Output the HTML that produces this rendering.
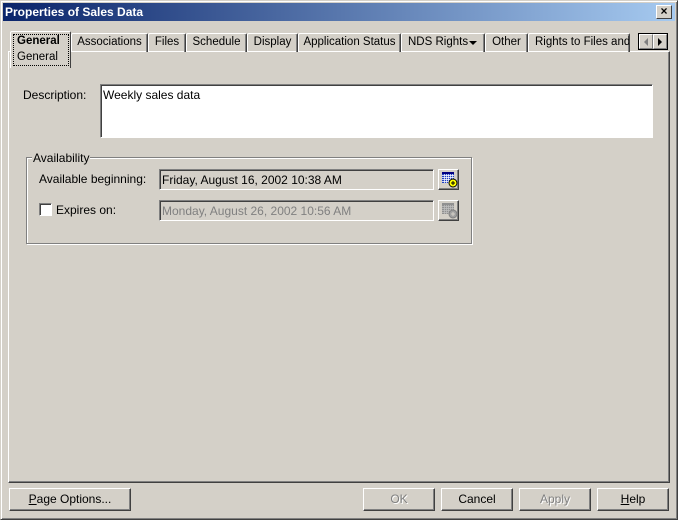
<!DOCTYPE html>
<html><head><style>
*{margin:0;padding:0;box-sizing:border-box}
body{width:678px;height:520px;background:#d4d0c8;font-family:"Liberation Sans",Arial,sans-serif;font-size:12px;color:#000;position:relative;overflow:hidden}
.a{position:absolute}
.win{left:0;top:0;width:678px;height:520px;border:1px solid;border-color:#d4d0c8 #404040 #404040 #d4d0c8;box-shadow:inset 1px 1px 0 #fff,inset -1px -1px 0 #808080}
.title{left:3px;top:3px;width:672px;height:18px;background:linear-gradient(to right,#0a246a,#a6caf0);color:#fff;font-weight:bold;font-size:12px;line-height:18px;padding-left:2px}
.close{left:656px;top:5px;width:16px;height:14px;background:#d4d0c8;border:1px solid;border-color:#fff #404040 #404040 #fff;font-size:12px;font-weight:bold;line-height:11px;text-align:center}
.tab{top:33px;height:19px;border:1px solid;border-bottom:none;border-color:#fff #404040 #fff #fff;line-height:16px;text-align:center;box-shadow:inset -1px 0 0 #808080;border-radius:2px 2px 0 0;white-space:nowrap;overflow:hidden;font-size:11.5px}
.panel{left:8px;top:51px;width:662px;height:432px;border:1px solid;border-color:#fff #404040 #404040 #fff;box-shadow:inset -1px -1px 0 #808080}
.sunk{border:1px solid;border-color:#808080 #fff #fff #808080;box-shadow:inset 1px 1px 0 #404040}
.btn{height:23px;border:1px solid;border-color:#fff #404040 #404040 #fff;box-shadow:inset -1px -1px 0 #808080;text-align:center;line-height:20px;font-size:12px}
.dis{color:#808080;text-shadow:1px 1px 0 #fff}
</style></head><body>
<div class="a win"></div>
<div class="a title">Properties of Sales Data</div>
<div class="a close">×</div>

<div class="a panel"></div>
<div class="a tab" style="left:71px;width:77px">Associations</div>
<div class="a tab" style="left:148px;width:38px">Files</div>
<div class="a tab" style="left:186px;width:61px">Schedule</div>
<div class="a tab" style="left:247px;width:51px">Display</div>
<div class="a tab" style="left:298px;width:103px">Application Status</div>
<div class="a tab" style="left:401px;width:84px;text-align:left;padding-left:6px">NDS Rights<span class="a" style="left:67px;top:7px;width:0;height:0;border-left:4px solid transparent;border-right:4px solid transparent;border-top:4px solid #000"></span></div>
<div class="a tab" style="left:485px;width:43px">Other</div>
<div class="a tab" style="left:528px;width:102px;text-align:left;padding-left:6px">Rights to Files and F</div>
<div class="a" style="left:638px;top:33px;width:30px;height:17px;border:1px solid #000;background:#d4d0c8">
 <div class="a" style="left:0;top:0;width:14px;height:15px;border:1px solid;border-color:#fff #808080 #808080 #fff"><span class="a" style="left:4px;top:3px;border-top:4px solid transparent;border-bottom:4px solid transparent;border-right:4px solid #808080"></span></div>
 <div class="a" style="left:14px;top:0;width:14px;height:15px;border:1px solid;border-color:#fff #808080 #808080 #fff"><span class="a" style="left:4px;top:3px;border-top:4px solid transparent;border-bottom:4px solid transparent;border-left:4px solid #000"></span></div>
</div>
<div class="a" style="left:10px;top:31px;width:61px;height:37px;background:#d4d0c8;border:1px solid;border-bottom:none;border-color:#fff #404040 #fff #fff;border-radius:2px 2px 0 0"></div>
<div class="a" style="left:13px;top:34px;width:56px;height:32px;border:1px dotted #000"></div>
<div class="a" style="left:17px;top:35px;font-weight:bold;font-size:11.5px">General</div>
<div class="a" style="left:17px;top:51px;font-size:11.5px">General</div>

<div class="a" style="left:23px;top:88px">Description:</div>
<div class="a sunk" style="left:100px;top:84px;width:553px;height:54px;background:#fff;padding:3px 2px;font-size:12px">Weekly sales data</div>

<div class="a" style="left:26px;top:157px;width:446px;height:87px;border:1px solid #808080;box-shadow:1px 1px 0 #fff,inset 1px 1px 0 #fff"></div>
<div class="a" style="left:32px;top:151px;background:#d4d0c8;padding:0 1px">Availability</div>
<div class="a" style="left:39px;top:172px;font-size:12px">Available beginning:</div>
<div class="a sunk" style="left:159px;top:169px;width:275px;height:21px;padding:3px 2px;font-size:12px">Friday, August 16, 2002 10:38 AM</div>
<div class="a sunk" style="left:159px;top:200px;width:275px;height:21px;padding:3px 2px;font-size:12px;color:#808080">Monday, August 26, 2002 10:56 AM</div>
<div class="a" style="left:39px;top:203px;width:13px;height:13px;background:#fff;border:1px solid;border-color:#808080 #fff #fff #808080;box-shadow:inset 1px 1px 0 #404040"></div>
<div class="a" style="left:56px;top:203px;font-size:12px">Expires on:</div>

<div class="a btn" style="left:438px;top:169px;width:21px;height:21px">
<svg class="a" style="left:2px;top:1px" width="17" height="17"><rect x="1" y="1" width="12" height="11" fill="#2040c0"/><path d="M1 4.5h12M1 6.5h12M1 8.5h12M1 10.5h12M3.5 3v9M5.5 3v9M7.5 3v9M9.5 3v9M11.5 3v9" stroke="#fff" stroke-width=".7"/><rect x="1" y="1" width="12" height="2" fill="#000080"/><circle cx="12" cy="12" r="4" fill="#ff0" stroke="#000"/><path d="M10 12h4M12 10v4" stroke="#000"/></svg></div>
<div class="a btn" style="left:438px;top:200px;width:21px;height:21px">
<svg class="a" style="left:2px;top:1px" width="17" height="17"><rect x="1" y="1" width="12" height="11" fill="#909090"/><path d="M1 4.5h12M1 6.5h12M1 8.5h12M1 10.5h12M3.5 3v9M5.5 3v9M7.5 3v9M9.5 3v9M11.5 3v9" stroke="#c0c0c0" stroke-width=".7"/><circle cx="12" cy="12" r="4" fill="#a0a0a0" stroke="#808080"/><path d="M10 12h4M12 10v4" stroke="#d4d0c8"/></svg></div>

<div class="a btn" style="left:9px;top:488px;width:122px"><u>P</u>age Options...</div>
<div class="a btn dis" style="left:363px;top:488px;width:72px">OK</div>
<div class="a btn" style="left:441px;top:488px;width:72px">Cancel</div>
<div class="a btn dis" style="left:519px;top:488px;width:72px">Apply</div>
<div class="a btn" style="left:597px;top:488px;width:72px"><u>H</u>elp</div>
</body></html>
